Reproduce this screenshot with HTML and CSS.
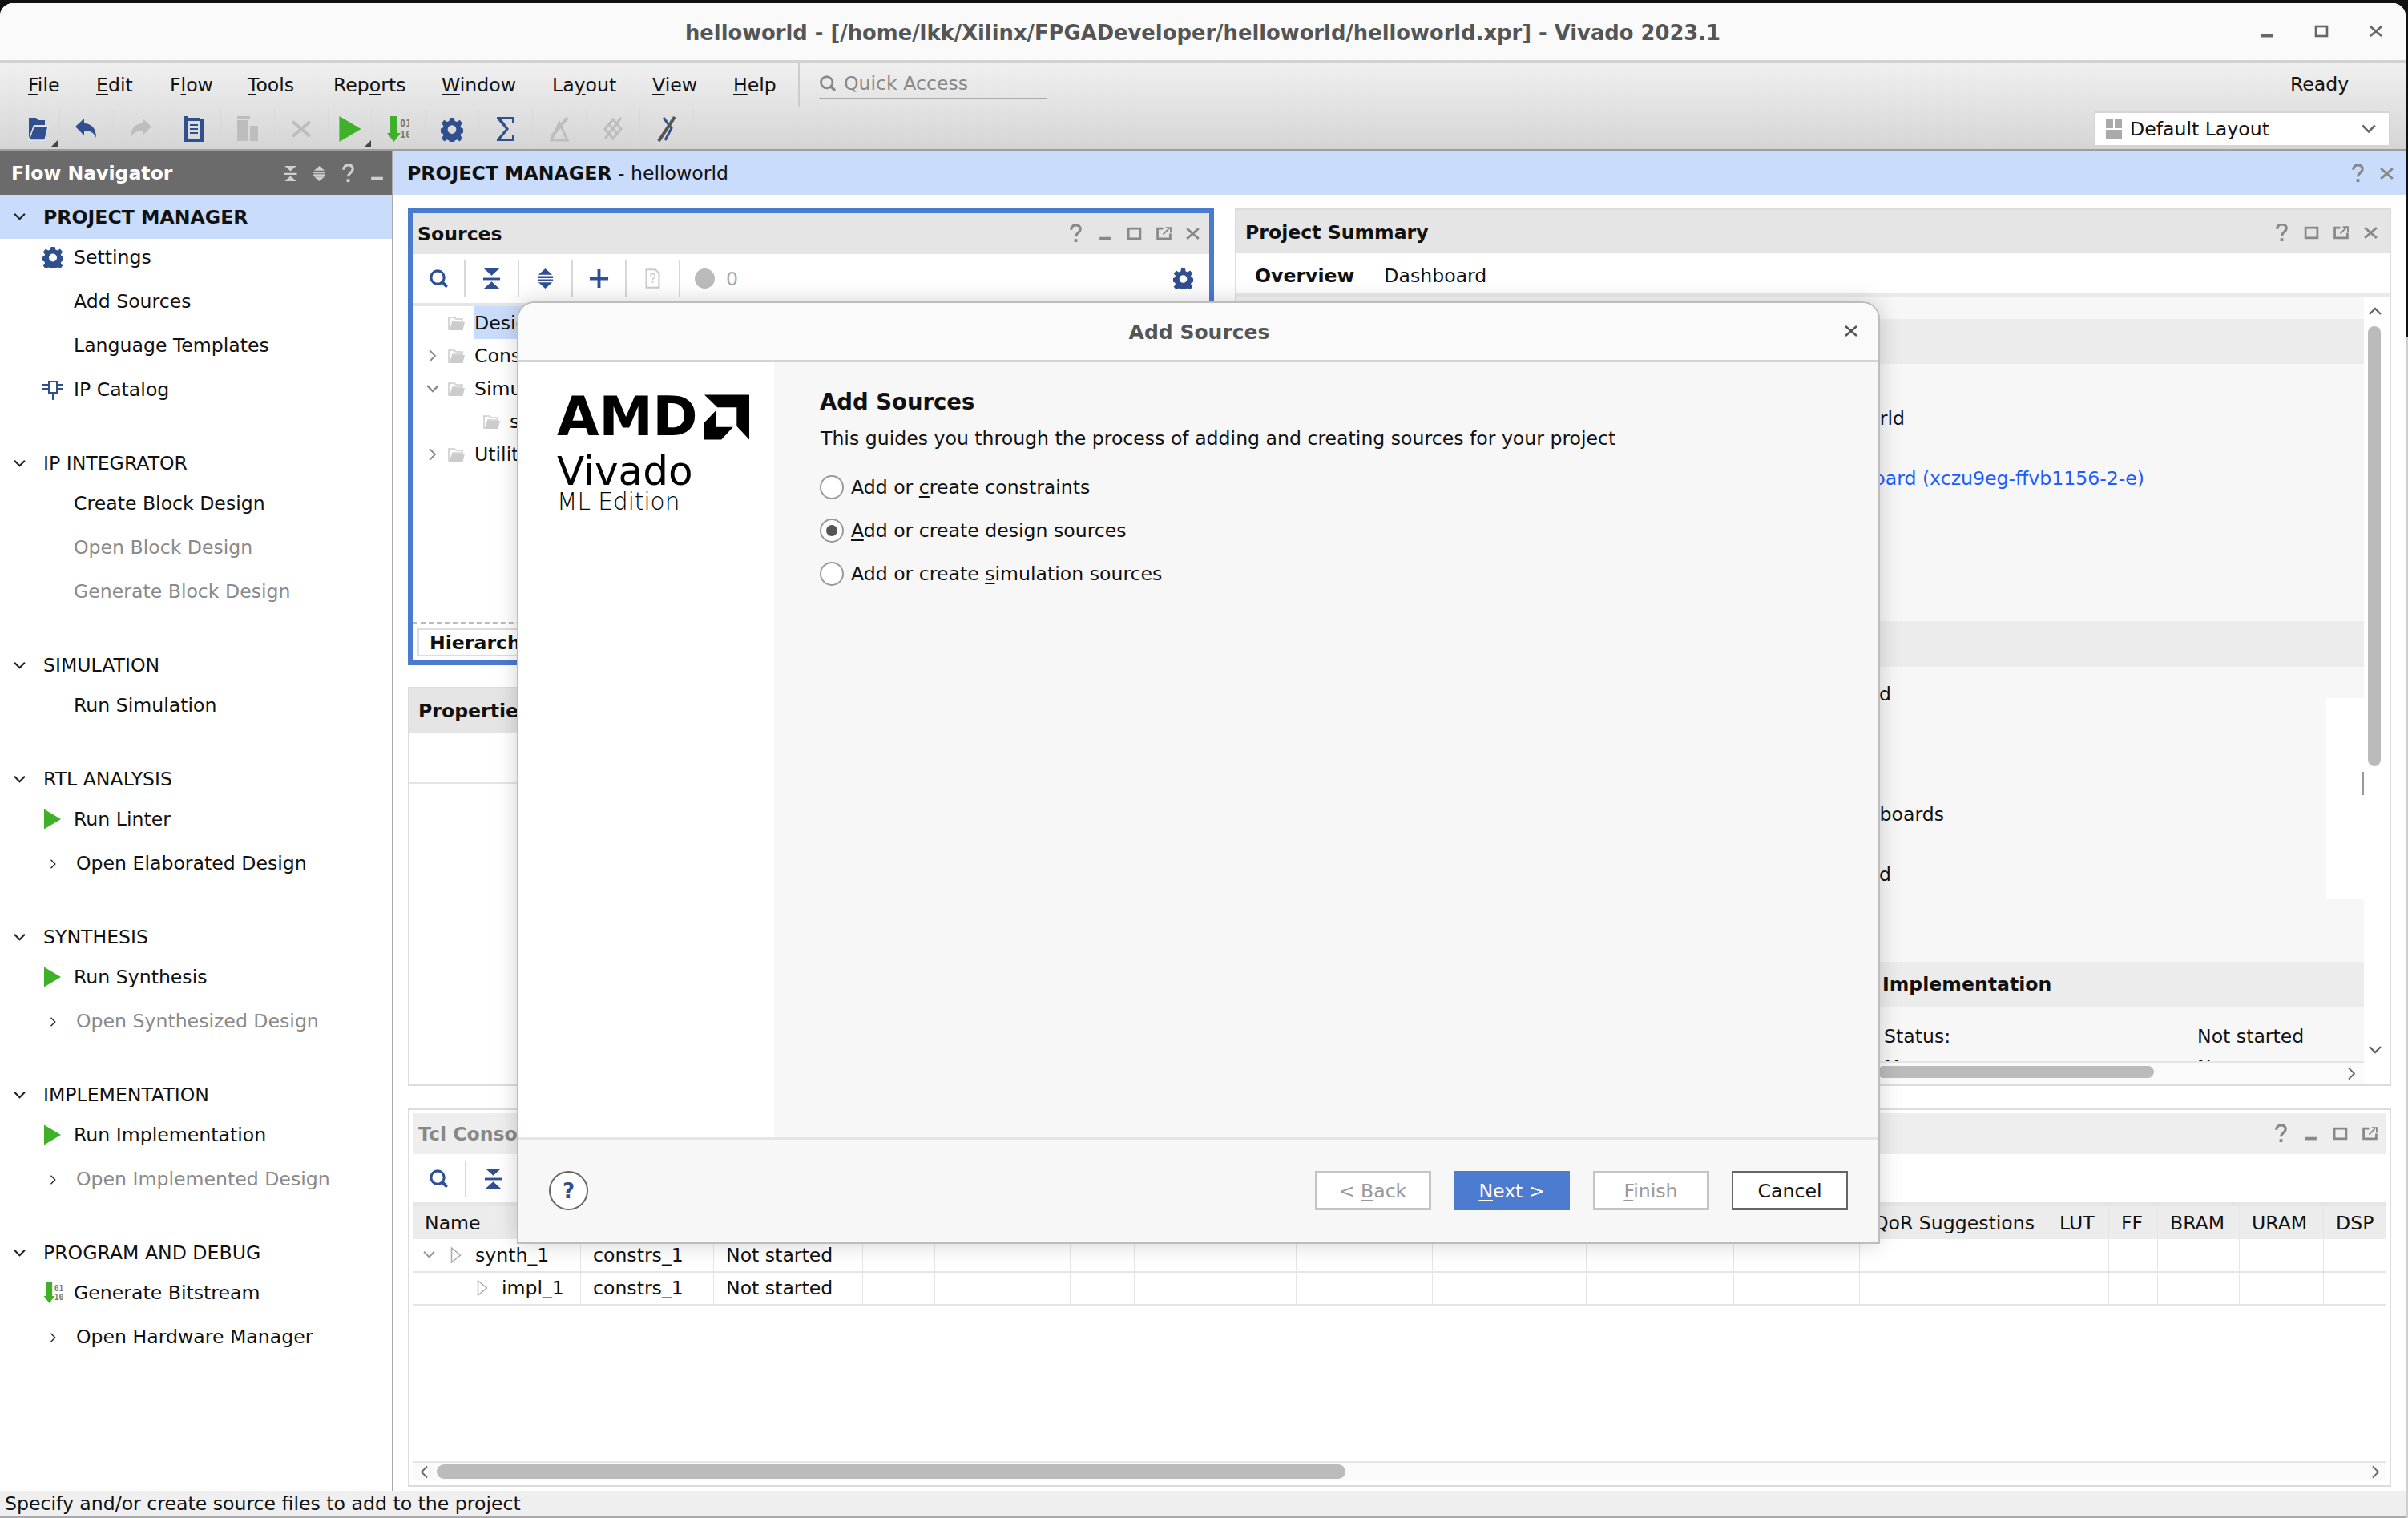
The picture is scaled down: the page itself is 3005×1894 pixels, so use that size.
FILE: index.html
```html
<!DOCTYPE html>
<html lang="en">
<head>
<meta charset="utf-8">
<title>helloworld - Vivado 2023.1</title>
<link rel="stylesheet" href="styles.css">
</head>
<body>
<svg class="defs" width="0" height="0" aria-hidden="true">
  <symbol id="i-search" viewBox="0 0 26 26"><circle cx="11.5" cy="11.5" r="8.5" fill="none" stroke="currentColor" stroke-width="3.2"/><path d="M18 18l4.5 4.5" stroke="currentColor" stroke-width="4" stroke-linecap="round"/></symbol>
  <symbol id="i-collapse" viewBox="0 0 26 26"><path d="M3 0h20l-10 9zM3 26h20l-10-9z" fill="currentColor"/><path d="M2 12h22v3H2z" fill="currentColor"/></symbol>
  <symbol id="i-expand" viewBox="0 0 26 26"><path d="M13 0l9 8H4zM13 26l9-8H4z" fill="currentColor"/><path d="M3 10h20v2.500H3zM3 14h20v2.500H3z" fill="currentColor"/></symbol>
  <symbol id="i-plus" viewBox="0 0 26 26"><path d="M11 1h4v10h10v4H15v10h-4V15H1v-4h10z" fill="currentColor"/></symbol>
  <symbol id="i-gear" viewBox="0 0 26 26"><path fill="currentColor" fill-rule="evenodd" d="M10.500 0h5l.8 3.600 2.500 1 3.200-2 3.200 3.800-2.300 3 .8 2.400 3.300 1.100v4.200l-3.300 1.100-.8 2.400 2.300 3-3.200 3.800-3.200-2-2.500 1-.8 3.600h-5l-.8-3.600-2.500-1-3.200 2L.800 23.600l2.300-3-.8-2.400L-1 17.100v-4.200l3.300-1.100.8-2.400-2.300-3L4 2.600l3.200 2 2.500-1zM13 8.500a5 5 0 1 0 0 10 5 5 0 0 0 0-10z"/></symbol>
  <symbol id="i-play" viewBox="0 0 22 26"><path d="M0 0l22 13L0 26z" fill="currentColor"/></symbol>
  <symbol id="i-folder" viewBox="0 0 22 22"><path d="M1 4h7l2 2h8v3H6L3 19H1z" fill="none" stroke="currentColor" stroke-width="1.600"/><path d="M6 10h15l-2.500 10H2.500z" fill="currentColor"/></symbol>
  <symbol id="i-open" viewBox="0 0 28 32"><path d="M2 2h9l3 3h8v6H8L2 30z" fill="#2f4f8f"/><path d="M8 13h18l-4 17H2z" fill="#2f4f8f" stroke="#dfe6f3" stroke-width="1.500"/></symbol>
  <symbol id="i-undo" viewBox="0 0 28 28"><path d="M0 11L11 1v6c9 0 15 6 15 18-3-7-8-9-15-9v6z" fill="currentColor"/></symbol>
  <symbol id="i-redo" viewBox="0 0 28 28"><path d="M28 11L17 1v6C8 7 2 13 2 25c3-7 8-9 15-9v6z" fill="currentColor"/></symbol>
  <symbol id="i-doc" viewBox="0 0 24 32"><path fill="currentColor" fill-rule="evenodd" d="M0 0h4v2h16v2h4v28H0zM4 6v23h16V6zM7 10h10v2H7zM7 15h10v2H7zM7 20h10v2H7z"/></symbol>
  <symbol id="i-docq" viewBox="0 0 22 30"><path d="M1.500 1.500H15l5.500 5.500v21.500h-19z" fill="none" stroke="currentColor" stroke-width="2.600"/><path d="M7.500 11.500c0-5 7-5 7-.5 0 3-3.500 3-3.500 6" fill="none" stroke="currentColor" stroke-width="1.800"/><rect x="10" y="19" width="2" height="2.500" fill="currentColor"/></symbol>
  <symbol id="i-copy" viewBox="0 0 26 32"><path fill="currentColor" d="M0 0h16v4H0zM0 5h14v26H0zM16 12h10v19H16z"/></symbol>
  <symbol id="i-bit" viewBox="0 0 26 32"><path d="M3 0h9v21h4L7.500 32 -1 21h4z" fill="#3fb027"/><text x="15" y="13" class="bit-text">01</text><text x="15" y="27" class="bit-text">10</text></symbol>
  <symbol id="i-sigma" viewBox="0 0 26 32"><path d="M2 1h22v7h-3V4H8l9 12L7 28h14v-4h3v7H2v-2l11-13L2 3z" fill="currentColor"/></symbol>
  <symbol id="i-route" viewBox="0 0 28 32"><path d="M4 30L14 8l10 22z" fill="none" stroke="currentColor" stroke-width="3"/><path d="M4 26L24 2" stroke="currentColor" stroke-width="4"/></symbol>
  <symbol id="i-diamond" viewBox="0 0 28 32"><path d="M14 4l10 12-10 12L4 16z" fill="none" stroke="currentColor" stroke-width="3"/><path d="M9 10l10 12M4 28L24 2" stroke="currentColor" stroke-width="3"/></symbol>
  <symbol id="i-pin" viewBox="0 0 28 32"><path d="M10 2l10 13-8 15" fill="none" stroke="#2f4f8f" stroke-width="3"/><path d="M4 31L24 1" stroke="#555" stroke-width="4"/></symbol>
  <symbol id="i-ip" viewBox="0 0 26 26"><path d="M8 3h10v14H8zM0 7h8M0 12h8M18 7h8M18 12h8M13 17v9" fill="none" stroke="currentColor" stroke-width="2"/></symbol>
  <symbol id="i-help" viewBox="0 0 16 24"><path d="M2 7c0-8 12-8 12-1 0 5-6 5-6 10" fill="none" stroke="currentColor" stroke-width="3.400"/><rect x="6" y="19" width="4" height="4" fill="currentColor"/></symbol>
  <symbol id="i-min" viewBox="0 0 18 18"><rect x="2" y="13" width="14" height="3.500" fill="currentColor"/></symbol>
  <symbol id="i-max" viewBox="0 0 18 18"><rect x="2" y="3" width="14" height="12" fill="none" stroke="currentColor" stroke-width="2.600"/></symbol>
  <symbol id="i-float" viewBox="0 0 18 18"><path d="M8 3H1.500v12h15V9" fill="none" stroke="currentColor" stroke-width="2.600"/><path d="M8 10l7-7M11 2h6v6" fill="none" stroke="currentColor" stroke-width="1.800"/></symbol>
  <symbol id="i-x" viewBox="0 0 18 18"><path d="M2 3l14 12M16 3L2 15" stroke="currentColor" stroke-width="2.600" fill="none"/></symbol>
  <symbol id="i-down" viewBox="0 0 18 12"><path d="M2 2l7 7 7-7" fill="none" stroke="currentColor" stroke-width="2.400"/></symbol>
  <symbol id="i-right" viewBox="0 0 12 18"><path d="M2 2l7 7-7 7" fill="none" stroke="currentColor" stroke-width="1.800"/></symbol>
  <symbol id="i-tri" viewBox="0 0 14 22"><path d="M1.500 2L12.500 11 1.500 20z" fill="none" stroke="currentColor" stroke-width="1.500"/></symbol>
</svg>

<div class="window">
  <header class="titlebar">
    <h1 class="title">helloworld - [/home/lkk/Xilinx/FPGADeveloper/helloworld/helloworld.xpr] - Vivado 2023.1</h1>
    <div class="winctl">
      <svg class="ic16"><use href="#i-min"/></svg>
      <svg class="ic16"><use href="#i-max"/></svg>
      <svg class="ic16"><use href="#i-x"/></svg>
    </div>
  </header>

  <div class="chrome">
    <div class="menurow">
      <nav class="menu">
        <span class="m m-file"><u>F</u>ile</span>
        <span class="m m-edit"><u>E</u>dit</span>
        <span class="m m-flow">F<u>l</u>ow</span>
        <span class="m m-tools"><u>T</u>ools</span>
        <span class="m m-reports">Rep<u>o</u>rts</span>
        <span class="m m-window"><u>W</u>indow</span>
        <span class="m m-layout">La<u>y</u>out</span>
        <span class="m m-view"><u>V</u>iew</span>
        <span class="m m-help"><u>H</u>elp</span>
      </nav>
      <div class="quick">
        <span class="quick-text"><svg class="ic-q"><use href="#i-search"/></svg>Quick Access</span>
      </div>
      <span class="ready">Ready</span>
    </div>
    <div class="toolrow">
      <div class="tools">
        <span class="tool tool-first"><svg class="t-ic"><use href="#i-open"/></svg><i class="corner"></i></span>
        <span class="tool blue"><svg class="t-ic"><use href="#i-undo"/></svg></span>
        <span class="tool dis"><svg class="t-ic"><use href="#i-redo"/></svg></span>
        <span class="tool blue"><svg class="t-ic"><use href="#i-doc"/></svg></span>
        <span class="tool dis"><svg class="t-ic"><use href="#i-copy"/></svg></span>
        <span class="tool dis"><svg class="t-ic"><use href="#i-x"/></svg></span>
        <span class="tool tool-run green"><svg class="t-ic"><use href="#i-play"/></svg><i class="corner"></i></span>
        <span class="tool"><svg class="t-ic"><use href="#i-bit"/></svg></span>
        <span class="tool blue"><svg class="t-ic"><use href="#i-gear"/></svg></span>
        <span class="tool blue"><svg class="t-ic"><use href="#i-sigma"/></svg></span>
        <span class="tool dis"><svg class="t-ic"><use href="#i-route"/></svg></span>
        <span class="tool dis"><svg class="t-ic"><use href="#i-diamond"/></svg></span>
        <span class="tool"><svg class="t-ic"><use href="#i-pin"/></svg></span>
      </div>
      <div class="combo">
        <span class="combo-ic"><i></i><i></i><i class="wide"></i></span>
        <span class="combo-text">Default Layout</span>
        <svg class="combo-arrow"><use href="#i-down"/></svg>
      </div>
    </div>
  </div>

  <div class="main">
    <aside class="nav">
      <div class="nav-head">
        <span class="nav-title">Flow Navigator</span>
        <span class="nav-tools">
          <svg class="ic14"><use href="#i-collapse"/></svg>
          <svg class="ic14"><use href="#i-expand"/></svg>
          <svg class="ic14"><use href="#i-help"/></svg>
          <svg class="ic14"><use href="#i-min"/></svg>
        </span>
      </div>
      <div class="group group-first">
        <div class="ghead active"><svg class="gchev"><use href="#i-down"/></svg>PROJECT MANAGER</div>
        <div class="items items-first">
          <div class="item"><svg class="iic blue"><use href="#i-gear"/></svg>Settings</div>
          <div class="item">Add Sources</div>
          <div class="item">Language Templates</div>
          <div class="item"><svg class="iic blue"><use href="#i-ip"/></svg>IP Catalog</div>
        </div>
      </div>
      <div class="group">
        <div class="ghead"><svg class="gchev"><use href="#i-down"/></svg>IP INTEGRATOR</div>
        <div class="item">Create Block Design</div>
        <div class="item off">Open Block Design</div>
        <div class="item off">Generate Block Design</div>
      </div>
      <div class="group">
        <div class="ghead"><svg class="gchev"><use href="#i-down"/></svg>SIMULATION</div>
        <div class="item">Run Simulation</div>
      </div>
      <div class="group">
        <div class="ghead"><svg class="gchev"><use href="#i-down"/></svg>RTL ANALYSIS</div>
        <div class="item"><svg class="iic green play"><use href="#i-play"/></svg>Run Linter</div>
        <div class="item sub"><svg class="schev"><use href="#i-right"/></svg>Open Elaborated Design</div>
      </div>
      <div class="group">
        <div class="ghead"><svg class="gchev"><use href="#i-down"/></svg>SYNTHESIS</div>
        <div class="item"><svg class="iic green play"><use href="#i-play"/></svg>Run Synthesis</div>
        <div class="item sub off"><svg class="schev"><use href="#i-right"/></svg>Open Synthesized Design</div>
      </div>
      <div class="group">
        <div class="ghead"><svg class="gchev"><use href="#i-down"/></svg>IMPLEMENTATION</div>
        <div class="item"><svg class="iic green play"><use href="#i-play"/></svg>Run Implementation</div>
        <div class="item sub off"><svg class="schev"><use href="#i-right"/></svg>Open Implemented Design</div>
      </div>
      <div class="group">
        <div class="ghead"><svg class="gchev"><use href="#i-down"/></svg>PROGRAM AND DEBUG</div>
        <div class="item"><svg class="iic bit"><use href="#i-bit"/></svg>Generate Bitstream</div>
        <div class="item sub"><svg class="schev"><use href="#i-right"/></svg>Open Hardware Manager</div>
      </div>
    </aside>

    <section class="content">
      <div class="banner">
        <span class="banner-title"><b>PROJECT MANAGER</b> - helloworld</span>
        <span class="banner-tools">
          <svg class="ic14"><use href="#i-help"/></svg>
          <svg class="ic14"><use href="#i-x"/></svg>
        </span>
      </div>
      <div class="work">
        <div class="upper">
          <div class="leftcol">
            <div class="panel sources">
              <div class="phead">
                <span class="ptitle">Sources</span>
                <span class="ptools">
                  <svg class="ic14"><use href="#i-help"/></svg>
                  <svg class="ic14"><use href="#i-min"/></svg>
                  <svg class="ic14"><use href="#i-max"/></svg>
                  <svg class="ic14"><use href="#i-float"/></svg>
                  <svg class="ic14"><use href="#i-x"/></svg>
                </span>
              </div>
              <div class="ptool">
                <span class="pt"><svg class="pt-ic"><use href="#i-search"/></svg></span>
                <span class="pt"><svg class="pt-ic"><use href="#i-collapse"/></svg></span>
                <span class="pt"><svg class="pt-ic"><use href="#i-expand"/></svg></span>
                <span class="pt"><svg class="pt-ic"><use href="#i-plus"/></svg></span>
                <span class="pt pt-dis"><svg class="pt-ic"><use href="#i-docq"/></svg></span>
                <span class="badge"><i class="dot"></i>0</span>
                <svg class="pt-ic gear-end"><use href="#i-gear"/></svg>
              </div>
              <div class="tree">
                <div class="tr"><span class="tchev"></span><svg class="fold"><use href="#i-folder"/></svg><span class="tl sel">Design Sources</span></div>
                <div class="tr"><svg class="tchev"><use href="#i-right"/></svg><svg class="fold"><use href="#i-folder"/></svg><span class="tl">Constraints</span></div>
                <div class="tr"><svg class="tchev wide"><use href="#i-down"/></svg><svg class="fold"><use href="#i-folder"/></svg><span class="tl">Simulation Sources</span></div>
                <div class="tr tr-child"><span class="tchev"></span><svg class="fold"><use href="#i-folder"/></svg><span class="tl">sim_1</span></div>
                <div class="tr"><svg class="tchev"><use href="#i-right"/></svg><svg class="fold"><use href="#i-folder"/></svg><span class="tl">Utility Sources</span></div>
              </div>
              <div class="ptabs"><span class="ptab">Hierarchy</span></div>
            </div>
            <div class="panel props">
              <div class="phead"><span class="ptitle">Properties</span></div>
              <div class="props-bar"></div>
            </div>
          </div>

          <div class="panel summary">
            <div class="phead">
              <span class="ptitle">Project Summary</span>
              <span class="ptools">
                <svg class="ic14"><use href="#i-help"/></svg>
                <svg class="ic14"><use href="#i-max"/></svg>
                <svg class="ic14"><use href="#i-float"/></svg>
                <svg class="ic14"><use href="#i-x"/></svg>
              </span>
            </div>
            <div class="stabs"><b class="stab-on">Overview</b><span class="stab">Dashboard</span></div>
            <div class="sbody">
              <div class="sview">
                <div class="sscroll">
                  <div class="sbar">Settings</div>
                  <div class="ssec ssec-1">
                    <div class="srow">helloworld</div>
                    <div class="srow end-loc">/home/lkk/Xilinx/FPGADeveloper/helloworld</div>
                    <div class="srow">Zynq UltraScale+</div>
                    <div class="srow end-part link">Zynq UltraScale+ ZCU102 Evaluation Board (xczu9eg-ffvb1156-2-e)</div>
                  </div>
                  <div class="sbar sbar-2">Board Part</div>
                  <div class="ssec ssec-2">
                    <div class="srow end-dir">/home/lkk/Xilinx/FPGADeveloper/helloworld</div>
                    <div class="srow">Verilog</div>
                    <div class="srow">Mixed</div>
                    <div class="srow">Vivado Simulator</div>
                    <div class="srow end-boards">/tools/Xilinx/Vivado/2023.1/data/xhub/boards</div>
                    <div class="srow">None</div>
                    <div class="srow end-dir">/home/lkk/Xilinx/FPGADeveloper/helloworld</div>
                    <i class="chartbox"></i>
                    <i class="chartmark"></i>
                  </div>
                  <div class="sbar sbar-3"><b>Implementation</b></div>
                  <div class="ssec ssec-3">
                    <div class="irow"><span>Status:</span><span>Not started</span></div>
                    <div class="irow"><span>Messages:</span><span>No errors</span></div>
                  </div>
                </div>
                <div class="shscroll"><i class="hthumb"></i><svg class="harrow"><use href="#i-right"/></svg></div>
              </div>
              <div class="svscroll">
                <svg class="varrow up"><use href="#i-down"/></svg>
                <i class="vthumb"></i>
                <svg class="varrow"><use href="#i-down"/></svg>
              </div>
            </div>
          </div>
        </div>

        <div class="panel lower">
          <div class="phead phead-dim">
            <span class="ptitle dim">Tcl Console</span>
            <span class="ptools">
              <svg class="ic14"><use href="#i-help"/></svg>
              <svg class="ic14"><use href="#i-min"/></svg>
              <svg class="ic14"><use href="#i-max"/></svg>
              <svg class="ic14"><use href="#i-float"/></svg>
            </span>
          </div>
          <div class="ptool ptool-low">
            <span class="pt"><svg class="pt-ic"><use href="#i-search"/></svg></span>
            <span class="pt pt-last"><svg class="pt-ic"><use href="#i-collapse"/></svg></span>
          </div>
          <div class="tbl">
            <div class="tbl-row thead">
              <span class="c c1">Name</span><span class="c c2">Constraints</span><span class="c c3">Status</span>
              <span class="c c4">WNS</span><span class="c c5">TNS</span><span class="c c6">WHS</span><span class="c c7">THS</span>
              <span class="c c8">WBSS</span><span class="c c9">TPWS</span><span class="c c10">Total Power</span><span class="c c11">Failed Routes</span>
              <span class="c c12">Methodology</span><span class="c c13">RQA Score</span><span class="c c14">QoR Suggestions</span>
              <span class="c c15">LUT</span><span class="c c16">FF</span><span class="c c17">BRAM</span><span class="c c18">URAM</span><span class="c c19">DSP</span>
            </div>
            <div class="tbl-row">
              <span class="c c1 name-1"><svg class="rchev"><use href="#i-down"/></svg><svg class="rtri"><use href="#i-tri"/></svg>synth_1</span>
              <span class="c c2">constrs_1</span><span class="c c3">Not started</span>
              <span class="c c4"></span><span class="c c5"></span><span class="c c6"></span><span class="c c7"></span><span class="c c8"></span><span class="c c9"></span><span class="c c10"></span><span class="c c11"></span><span class="c c12"></span><span class="c c13"></span><span class="c c14"></span><span class="c c15"></span><span class="c c16"></span><span class="c c17"></span><span class="c c18"></span><span class="c c19"></span>
            </div>
            <div class="tbl-row">
              <span class="c c1 name-2"><svg class="rtri"><use href="#i-tri"/></svg>impl_1</span>
              <span class="c c2">constrs_1</span><span class="c c3">Not started</span>
              <span class="c c4"></span><span class="c c5"></span><span class="c c6"></span><span class="c c7"></span><span class="c c8"></span><span class="c c9"></span><span class="c c10"></span><span class="c c11"></span><span class="c c12"></span><span class="c c13"></span><span class="c c14"></span><span class="c c15"></span><span class="c c16"></span><span class="c c17"></span><span class="c c18"></span><span class="c c19"></span>
            </div>
          </div>
          <div class="lscroll">
            <svg class="larrow left"><use href="#i-right"/></svg>
            <i class="lthumb"></i>
            <svg class="larrow"><use href="#i-right"/></svg>
          </div>
        </div>
      </div>
    </section>
  </div>

  <footer class="status">Specify and/or create source files to add to the project</footer>
</div>

<div class="dialog">
  <div class="dhead">
    <span class="dtitle">Add Sources</span>
    <svg class="dclose"><use href="#i-x"/></svg>
  </div>
  <div class="dbody">
    <div class="dside">
      <div class="amd"><span class="amd-text">AMD</span>
        <svg class="amd-mark" viewBox="0 0 100 100"><path d="M0 0H100V100L72 70V28H29z"/><path d="M26 35L0 62V100H38L64 72H26z"/></svg>
      </div>
      <div class="vivado">Vivado</div>
      <div class="edition">ML Edition</div>
    </div>
    <div class="dmain">
      <h2 class="dh">Add Sources</h2>
      <p class="dp">This guides you through the process of adding and creating sources for your project</p>
      <label class="radio"><i class="rb"></i><span>Add or <u>c</u>reate constraints</span></label>
      <label class="radio"><i class="rb on"></i><span><u>A</u>dd or create design sources</span></label>
      <label class="radio"><i class="rb"></i><span>Add or create <u>s</u>imulation sources</span></label>
    </div>
  </div>
  <div class="dfoot">
    <span class="dhelp">?</span>
    <div class="btns">
      <span class="btn btn-off">&lt; <u>B</u>ack</span>
      <span class="btn btn-pri"><u>N</u>ext &gt;</span>
      <span class="btn btn-off"><u>F</u>inish</span>
      <span class="btn btn-cancel">Cancel</span>
    </div>
  </div>
</div>
</body>
</html>
```
FILE: styles.css
```css
* { box-sizing: border-box; }
html, body { margin: 0; padding: 0; }
body {
  width: 3005px; height: 1894px; overflow: hidden; position: relative;
  background: linear-gradient(#111 420px, #cfcfcf 420px);
  font-family: "DejaVu Sans", sans-serif; font-size: 23.6px; color: #111;
}
.defs { position: absolute; }
.bit-text { font-family: "DejaVu Sans Mono", monospace; font-size: 12px; font-weight: 700; fill: #777; }
svg { display: block; flex: none; overflow: visible; }
u { text-underline-offset: 3px; }
i { display: block; }
.blue { color: #2f4f8f; }
.green { color: #3fb027; }
.window {
  position: absolute; left: 0; top: 4px; width: 3002px; height: 1890px;
  background: #fff; border-radius: 16px 16px 0 0; overflow: hidden;
  display: flex; flex-direction: column;
}
.titlebar {
  height: 74px; flex: none; background: #fafafa; border-bottom: 3px solid #d2d2d2;
  display: flex; align-items: flex-start; justify-content: center; position: relative; padding-top: 20px;
}
.title { margin: 0; font-size: 25.8px; line-height: 34px; font-weight: 700; color: #555; white-space: nowrap; }
.winctl { position: absolute; right: 28px; top: 26px; display: flex; gap: 50px; color: #666; }
.ic16 { width: 18px; height: 18px; }
.chrome { height: 111px; flex: none; background: linear-gradient(#f0f0f0, #d5d5d5); border-bottom: 3px solid #9d9d9d; }
.menurow { height: 55px; display: flex; align-items: center; position: relative; }
.menu { width: 998px; height: 55px; flex: none; position: relative; border-right: 2px solid #ccc; display: flex; align-items: center; padding: 1px 0 0 35px; }
.m { flex: none; }
.m-file { width: 85px; } .m-edit { width: 92px; } .m-flow { width: 97px; } .m-tools { width: 107px; }
.m-reports { width: 135px; } .m-window { width: 138px; } .m-layout { width: 125px; } .m-view { width: 101px; }
.quick { margin-left: 24px; width: 285px; height: 47px; border-bottom: 2px solid #aaa; display: flex; align-items: center; margin-top: -10px; padding-top: 8px; }
.quick-text { color: #888; display: flex; align-items: center; gap: 9px; }
.ic-q { width: 22px; height: 22px; color: #888; }
.ready { position: absolute; left: 2858px; top: 13px; }
.toolrow { height: 53px; display: flex; align-items: flex-start; justify-content: space-between; padding: 4px 19px 0 14px; }
.tools { display: flex; height: 47px; }
.tool { width: 67px; height: 47px; position: relative; display: flex; align-items: center; justify-content: center; border-right: 1px solid #d8d8d8; }
.tool-first { width: 61px; padding-left: 7px; }
.tool-run { width: 54px; }
.dis { color: #bdbdbd; }
.t-ic { width: 28px; height: 32px; }
.corner { position: absolute; right: 7px; bottom: 0; width: 0; height: 0; border-left: 9px solid transparent; border-bottom: 9px solid #444; }
.tool-first .corner { right: 2px; }
.tool-run .corner { right: 0; }
.combo { width: 370px; height: 44px; background: #fff; border: 2px solid #d5d5d5; display: flex; align-items: center; padding: 0 10px 0 13px; margin-top: 2px; }
.combo-ic { width: 20px; height: 24px; display: grid; grid-template-columns: 9px 9px; gap: 2px; margin-right: 10px; }
.combo-ic i { background: #aaa; height: 11px; }
.combo-ic .wide { grid-column: 1 / 3; }
.combo-text { flex: 1; }
.combo-arrow { width: 20px; height: 14px; color: #666; margin-right: 5px; }

.main { flex: 1; display: flex; min-height: 0; }
.nav { width: 491px; flex: none; border-right: 2px solid #aaa; background: #fff; }
.nav-head { height: 54px; background: #6b6b6b; display: flex; align-items: center; justify-content: space-between; padding: 0 9px 0 14px; color: #fff; }
.nav-title { font-weight: 700; }
.nav-tools { display: flex; gap: 17px; color: #cfcfcf; }
.ic14 { width: 19px; height: 23px; }
.group { margin-top: 43px; }
.group-first { margin-top: 0; }
.ghead { height: 44px; display: flex; align-items: center; padding-left: 16px; }
.ghead.active { height: 55px; background: #c9dcfb; font-weight: 700; }
.gchev { width: 17px; height: 11px; margin-right: 21px; color: #222; }
.items-first { margin-top: -5px; }
.item { height: 55px; display: flex; align-items: center; padding-left: 92px; position: relative; }
.off { color: #8a8a8a; }
.iic { position: absolute; left: 53px; top: 15px; width: 26px; height: 26px; }
.play { left: 55px; width: 21px; }
.item .bit { left: 54px; width: 24px; }
.sub { padding-left: 95px; }
.schev { position: absolute; left: 62px; top: 22px; width: 9px; height: 14px; color: #222; }

.content { flex: 1; min-width: 0; display: flex; flex-direction: column; }
.banner { height: 54px; flex: none; background: #c9dcfb; display: flex; align-items: center; justify-content: space-between; padding: 0 14px 0 17px; }
.banner-tools { display: flex; gap: 17px; color: #888; }
.work { flex: 1; padding: 17px 18px 0 18px; display: flex; flex-direction: column; gap: 28px; }
.upper { height: 1095px; flex: none; display: flex; gap: 26px; }
.leftcol { width: 1006px; flex: none; display: flex; flex-direction: column; gap: 27px; }
.panel { background: #fff; display: flex; flex-direction: column; position: relative; border: 2px solid #dcdcdc; }
.phead { height: 52px; flex: none; background: #e5e5e5; display: flex; align-items: center; justify-content: space-between; padding: 0 18px 0 11px; }
.ptitle { font-weight: 700; color: #111; }
.ptools { display: flex; gap: 17.500px; color: #888; align-items: center; }
.ptool { height: 65px; flex: none; display: flex; align-items: center; border-bottom: 4px solid #e5e5e5; }
.pt { width: 67px; height: 45px; display: flex; align-items: center; justify-content: center; border-right: 2px solid #d8d8d8; color: #2f4f8f; flex: none; }
.pt-ic { width: 25px; height: 25px; }
.pt-dis { color: #ccc; }
.badge { display: flex; align-items: center; gap: 14px; color: #aaa; margin-left: 18px; flex: 1; }
.dot { width: 25px; height: 25px; border-radius: 50%; background: #bbb; }
.gear-end { color: #2f4f8f; margin-right: 20px; }
.sources { height: 570px; border: 6px solid #4b7bce; }
.sources .phead { padding: 0 11px 0 6px; height: 51px; }
.sources .pt:first-child { width: 66px; }
.tree { flex: 1; min-height: 0; }
.tr { height: 41px; display: flex; align-items: center; white-space: nowrap; }
.tchev { width: 14px; height: 18px; margin-left: 18px; margin-right: 12px; color: #888; flex: none; }
.tchev.wide { width: 18px; margin-left: 16px; margin-right: 10px; height: 12px; }
.fold { width: 22px; height: 22px; color: #ccc; margin-right: 11px; }
.tl { height: 41px; display: flex; align-items: center; }
.sel { background: #c9dcfb; padding-right: 40px; }
.tr-child { padding-left: 44px; }
.ptabs { height: 48px; flex: none; border-top: 2px dashed #bbb; padding: 6px 6px; }
.ptab { display: inline-flex; align-items: center; height: 35px; padding: 0 20px 0 13px; border: 2px solid #ddd; font-weight: 700; }
.props { flex: 1; }
.props .phead { height: 56px; }
.props-bar { height: 63px; border-bottom: 2px solid #e5e5e5; }

.summary { flex: 1; min-width: 0; border-width: 2px; }
.summary .phead { padding: 2px 14px 0 11px; height: 54px; }
.summary .ptools { gap: 18px; }
.stabs { height: 54px; flex: none; display: flex; align-items: center; padding: 6px 0 0 23px; border-bottom: 5px solid #eaeaea; }
.stab-on { padding-right: 18px; border-right: 1px solid #777; line-height: 26px; }
.stab { padding-left: 18px; }
.sbody { flex: 1; min-height: 0; display: flex; margin-right: 5px; }
.sview { flex: 1; min-width: 0; display: flex; flex-direction: column; background: #f7f7f7; }
.sscroll { flex: 1; min-height: 0; overflow: hidden; padding-top: 28px; }
.sbar { height: 56px; background: #ececec; display: flex; align-items: center; padding-left: 40px; color: #111; }
.sbar-3 { padding-left: 806px; }
.ssec { position: relative; white-space: nowrap; }
.ssec-1 { height: 321px; padding: 12px 0 0 295px; }
.ssec-2 { height: 368px; padding: 16px 0 0 278px; }
.sbar-2 { height: 57px; }
.srow { height: 37.500px; line-height: 37.500px; }
.end-loc, .end-part, .end-dir, .end-boards { display: flex; justify-content: flex-end; }
.end-loc { padding-right: 573px; }
.end-part { padding-right: 274px; }
.end-dir { padding-right: 590px; }
.end-boards { padding-right: 524px; }
.link { color: #1a5cff; }
.chartbox { position: absolute; right: 0; top: 39px; width: 47px; height: 251px; background: #fff; }
.chartmark { position: absolute; right: 0; top: 131px; width: 2px; height: 29px; background: #999; }
.ssec-3 { padding: 19px 0 0 808px; }
.irow { display: flex; height: 37.500px; line-height: 37.500px; }
.irow span:first-child { width: 391px; }
.shscroll { height: 29px; flex: none; background: #fafafa; border-top: 2px solid #e5e5e5; padding: 4px 0 0 800px; position: relative; }
.hthumb { width: 345px; height: 15px; border-radius: 8px; background: #bbb; }
.harrow { position: absolute; right: 9px; top: 4px; width: 12px; height: 19px; color: #666; }
.svscroll { width: 27px; flex: none; background: #fff; position: relative; padding: 37px 0 0 5px; }
.vthumb { width: 16px; height: 549px; border-radius: 8px; background: #bbb; }
.varrow { position: absolute; left: 4px; bottom: 37px; width: 20px; height: 12px; color: #666; }
.varrow.up { top: 12px; bottom: auto; transform: scaleY(-1); }

.lower { height: 472px; flex: none; padding: 4px 5px 6px 4px; }
.phead-dim { background: #eee; height: 51px; padding: 0 10px 0 7px; }
.phead-dim .ptools { gap: 18px; }
.dim { color: #888; }
.ptool-low { height: 65px; border-bottom: 5px solid #e5e5e5; }
.pt-last { border-right: 0; }
.tbl { flex: 1; min-height: 0; }
.tbl-row { display: flex; height: 41.500px; border-bottom: 2px solid #e5e5e5; }
.thead { background: #ececec; border-bottom: 0; height: 41px; }
.c { flex: none; height: 100%; display: flex; align-items: center; border-right: 1px solid #e5e5e5; padding-left: 15px; white-space: nowrap; overflow: hidden; }
.c1 { width: 210px; } .c2 { width: 166px; } .c3 { width: 186px; } .c4 { width: 90px; } .c5 { width: 84px; } .c6 { width: 85px; } .c7 { width: 80px; }
.c8 { width: 102px; } .c9 { width: 100px; } .c10 { width: 170px; } .c11 { width: 192px; } .c12 { width: 184px; } .c13 { width: 157px; } .c14 { width: 234px; }
.c15 { width: 77px; } .c16 { width: 61px; } .c17 { width: 102px; } .c18 { width: 105px; } .c19 { width: 78px; border-right: 0; }
.c14 { padding-left: 0; justify-content: flex-end; padding-right: 15px; }
.name-1 { padding-left: 12px; }
.name-2 { padding-left: 80px; }
.rchev { width: 17px; height: 11px; color: #999; margin-right: 18px; }
.rtri { width: 14px; height: 22px; color: #aaa; margin-right: 17px; }
.lscroll { height: 24px; flex: none; margin-top: auto; background: #fafafa; display: flex; align-items: center; position: relative; padding-left: 30px; border-top: 2px solid #e5e5e5; }
.lthumb { width: 1134px; height: 18px; border-radius: 9px; background: #bbb; }
.larrow { position: absolute; right: 6px; width: 12px; height: 19px; color: #666; }
.larrow.left { left: 8px; right: auto; transform: scaleX(-1); }

.status { height: 34px; flex: none; background: #efefef; border-bottom: 3px solid #aaa; padding-left: 6px; display: flex; align-items: center; }

.dialog {
  position: absolute; left: 645px; top: 376px; width: 1701px; height: 1176px;
  background: #f7f7f7; border: 2px solid #bdbdbd; border-radius: 22px 22px 0 0;
  box-shadow: 0 0 28px rgba(0,0,0,.18); display: flex; flex-direction: column; overflow: hidden;
}
.dhead { height: 74px; flex: none; background: #fafafa; border-bottom: 3px solid #d4d4d4; display: flex; align-items: center; justify-content: center; position: relative; padding: 2px 0 0 2px; }
.dtitle { font-weight: 700; font-size: 25px; color: #555; }
.dclose { position: absolute; right: 25px; top: 26px; width: 18px; height: 18px; color: #555; }
.dbody { flex: 1; min-height: 0; display: flex; }
.dside { width: 319px; flex: none; background: #fff; padding: 39px 0 0 48px; }
.amd { display: flex; align-items: center; height: 58px; }
.amd-text { font-size: 68px; font-weight: 700; color: #000; line-height: 58px; width: 184px; letter-spacing: -0.5px; }
.amd-mark { width: 56px; height: 57px; fill: #000; }
.vivado { font-size: 50px; color: #000; line-height: 58px; margin-top: 10px; }
.edition { font-size: 29.500px; font-weight: 200; color: #000; line-height: 34px; margin-top: -8px; }
.dmain { flex: 1; padding: 32px 0 0 57px; }
.dh { margin: 0; font-size: 27.500px; font-weight: 700; color: #111; line-height: 34px; }
.dp { margin: 12px 0 17px 1px; line-height: 34px; color: #111; }
.radio { display: flex; align-items: center; height: 54px; gap: 9px; }
.rb { width: 30px; height: 30px; border-radius: 50%; border: 2px solid #999; background: #fff; position: relative; }
.rb.on::after { content: ""; position: absolute; left: 6px; top: 6px; width: 14px; height: 14px; border-radius: 50%; background: #555; }
.dfoot { height: 131px; flex: none; border-top: 3px solid #e5e5e5; display: flex; align-items: flex-start; justify-content: space-between; padding: 39px 38px 0 38px; }
.dhelp { width: 49px; height: 49px; border: 2px solid #666; border-radius: 50%; background: #fff; display: flex; align-items: center; justify-content: center; font-weight: 700; color: #2f4f8f; font-size: 26px; }
.btns { display: flex; gap: 28.500px; }
.btn { display: block; width: 145px; height: 49px; line-height: 44px; text-align: center; white-space: pre; }
.btn-off { background: #fff; border: 3px solid #c4c4c4; color: #999; }
.btn-pri { background: #4d7bd0; color: #fff; line-height: 50px; }
.btn-cancel { background: #fff; border: 2px solid #666; border-top-width: 3px; border-bottom-width: 3px; color: #111; }
```
